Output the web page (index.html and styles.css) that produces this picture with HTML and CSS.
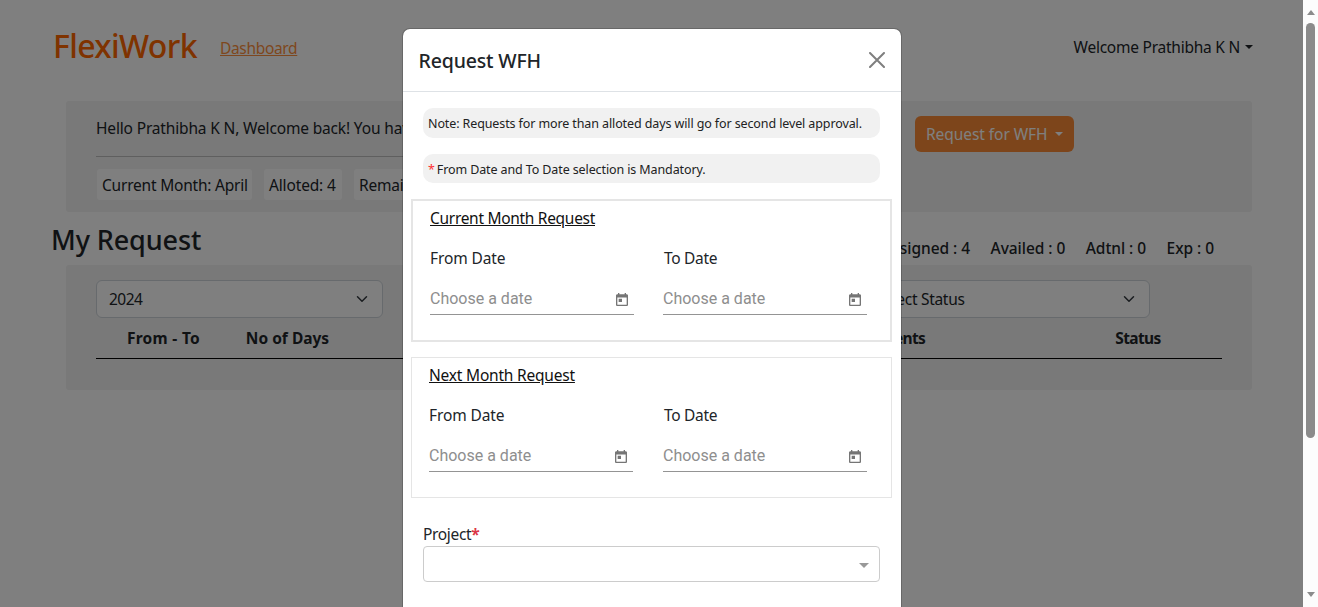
FILE: index.html
```html
<!DOCTYPE html>
<html lang="en">
<head>
<meta charset="utf-8">
<title>FlexiWork</title>
<link rel="stylesheet" href="styles.css">
</head>
<body>
<svg class="defs" width="0" height="0">
  <symbol id="calendar" viewBox="3 1 18 20" preserveAspectRatio="none"><path d="M19 3h-1V1h-2v2H8V1H6v2H5c-1.11 0-1.99.9-1.99 2L3 19c0 1.1.89 2 2 2h14c1.1 0 2-.9 2-2V5c0-1.1-.9-2-2-2zm0 16H5V8h14v11zM7 10h5v5H7z"/></symbol>
  <symbol id="chevron" viewBox="0 0 16 16"><path d="m2 5 6 6 6-6" fill="none" stroke="#343a40" stroke-width="2" stroke-linecap="round" stroke-linejoin="round"/></symbol>
</svg>
<div class="screen">
  <div class="page">
    <header class="topbar">
      <div class="brand">FlexiWork</div>
      <a class="nav-link">Dashboard</a>
      <div class="user"><span class="user-name">Welcome Prathibha K N</span><i class="caret"></i></div>
    </header>
    <section class="panel summary">
      <div class="summary-main">
        <div class="hello">Hello Prathibha K N, Welcome back! You have</div>
        <div class="chips">
          <span class="chip chip-month">Current Month: April</span>
          <span class="chip chip-alloted">Alloted: 4</span>
          <span class="chip chip-rest">Remain</span>
        </div>
      </div>
      <button class="request-btn"><span>Request for WFH</span><i class="caret"></i></button>
    </section>
    <div class="title-row">
      <h2>My Request</h2>
      <div class="stats"><span>Assigned : 4</span><span>Availed : 0</span><span>Adtnl : 0</span><span>Exp : 0</span></div>
    </div>
    <section class="panel list">
      <div class="filters">
        <div class="select"><span class="year">2024</span><svg width="16" height="12"><use href="#chevron"/></svg></div>
        <div class="select"><span class="status-value">Select Status</span><svg width="16" height="12"><use href="#chevron"/></svg></div>
      </div>
      <div class="thead"><span class="th-range">From - To</span><span>No of Days</span><span></span><span class="th-comments">Comments</span><span class="th-status">Status</span></div>
    </section>
  </div>
  <div class="scrollbar"><i class="up"></i><i class="thumb"></i><i class="down"></i></div>

  <div class="backdrop">
    <div class="modal">
      <div class="modal-head">
        <h5>Request WFH</h5>
        <svg width="16" height="16" viewBox="0 0 16 16"><path d="M1 1 15 15M15 1 1 15" stroke="#7f7f7f" stroke-width="2" stroke-linecap="round"/></svg>
      </div>
      <div class="note note-first">Note: Requests for more than alloted days will go for second level approval.</div>
      <div class="note note-second"><b>*</b><span>From Date and To Date selection is Mandatory.</span></div>
      <div class="box box-current">
        <div class="box-title">Current Month Request</div>
        <div class="fields">
          <div class="field"><label>From Date</label><div class="date"><span>Choose a date</span><svg width="12" height="13"><use href="#calendar"/></svg></div></div>
          <div class="field"><label class="to">To Date</label><div class="date"><span>Choose a date</span><svg width="12" height="13"><use href="#calendar"/></svg></div></div>
        </div>
      </div>
      <div class="box box-next">
        <div class="box-title">Next Month Request</div>
        <div class="fields">
          <div class="field"><label>From Date</label><div class="date"><span>Choose a date</span><svg width="12" height="13"><use href="#calendar"/></svg></div></div>
          <div class="field"><label class="to">To Date</label><div class="date"><span>Choose a date</span><svg width="12" height="13"><use href="#calendar"/></svg></div></div>
        </div>
      </div>
      <div class="project-label"><span>Project</span><b>*</b></div>
      <div class="project-select"><i></i></div>
    </div>
  </div>
</div>
</body>
</html>
```
FILE: styles.css
```css
* { box-sizing: border-box; }
body { margin: 0; font: 15.5px/24px "Noto Sans", "Open Sans", sans-serif; color: #212529; background: #fff; }
.defs { display: block; position: absolute; }
.screen { position: relative; display: flex; width: 1318px; height: 607px; overflow: hidden; }
.page { flex: 1; }

.topbar { display: flex; height: 101px; padding: 0 50px 0 52px; align-items: flex-start; }
.brand { margin-top: 22px; width: 168px; padding-left: 1px; font-size: 32px; line-height: 48px; font-weight: 500; letter-spacing: -.65px; color: #f60; }
.nav-link { margin-top: 36px; color: #fd8f3c; text-decoration: underline; letter-spacing: -.33px; }
.user { margin: 35px 0 0 auto; display: flex; align-items: center; gap: 5px; }
.user-name { letter-spacing: -.24px; white-space: nowrap; }
.caret { border: 4.5px solid transparent; border-top-color: currentColor; border-bottom: 0; }

.panel { margin: 0 51px 0 66px; border-radius: 3px; background: #f2f2f2; }
.summary { display: flex; height: 111px; padding: 15px 30px; }
.summary-main { width: 799px; margin-right: 20px; }
.hello { height: 41px; border-bottom: 1px solid #bfbfbf; letter-spacing: -.16px; }
.chips { display: flex; gap: 12px; margin: 12px 1px 0; }
.chip { height: 31px; padding: 4px 5px; border-radius: 3px; background: #fff; white-space: nowrap; letter-spacing: -.21px; }
.chip-month { width: 155px; }
.chip-alloted { width: 78px; letter-spacing: -.15px; }
.request-btn { display: flex; align-items: center; gap: 8px; width: 159px; height: 36px; padding: 0 11px; border: 0; border-radius: 6px; background: #fa8b36; color: #fff; font: inherit; letter-spacing: -.06px; white-space: nowrap; }

.title-row { display: flex; justify-content: space-between; height: 53px; padding: 0 89px 0 51px; }
h2 { margin: 10px 0 0; font-size: 27px; line-height: 36px; font-weight: 500; letter-spacing: -.1px; }
.stats { display: flex; gap: 20.5px; margin-top: 24px; font-weight: 500; letter-spacing: -.05px; }

.list { height: 125px; padding: 15px 30px; }
.filters { display: flex; gap: 480px; }
.select { display: flex; align-items: center; justify-content: space-between; width: 287px; height: 38px; padding: 0 12px; border: 1px solid #ced4da; border-radius: 6px; background: #fff; }
.year { letter-spacing: -.5px; }
.status-value { letter-spacing: -.3px; }
.thead { display: grid; grid-template-columns: 135px 113px 374px 336px 168px; height: 41px; padding-top: 8px; border-bottom: 1px solid #000; font-weight: 700; text-align: center; }
.th-range { letter-spacing: .3px; }
.th-comments { letter-spacing: -.7px; }
.th-status { letter-spacing: -.6px; }

.scrollbar { display: flex; flex-direction: column; align-items: center; width: 15px; background: #fcfcfc; }
.up, .down { border: 4.5px solid transparent; }
.up { margin-top: 10px; border-top: 0; border-bottom: 5px solid #8b8b8b; }
.down { margin-top: auto; margin-bottom: 10px; border-bottom: 0; border-top: 5px solid #8b8b8b; }
.thumb { width: 9px; height: 415px; margin-top: 8px; border-radius: 5px; background: #8b8b8b; }

.backdrop { position: absolute; inset: 0 15px 0 0; display: flex; justify-content: center; align-items: flex-start; background: rgba(0, 0, 0, .5); }
.modal { width: 500px; height: 700px; margin: 28px 0 0 1px; border: 1px solid rgba(0, 0, 0, .18); border-radius: 8px; background: #fff; background-clip: padding-box; }
.modal-head { display: flex; justify-content: space-between; align-items: center; height: 63px; padding: 0 16px 0 15.5px; border-bottom: 1px solid #dee2e6; }
h5 { margin: 2px 0 0; font-size: 19.5px; line-height: 30px; font-weight: 500; letter-spacing: -.16px; }
.note { margin: 16px 21px 0 20px; padding: 6px 5px 4px; border-radius: 10px; background: #f1f1f1; color: #222; font-size: 12.5px; line-height: 20px; letter-spacing: -.11px; white-space: nowrap; }
.note-first { height: 30px; }
.note-second { display: flex; gap: 2px; height: 29px; }
.note b { color: #ff3030; font-weight: 400; }
.box { margin: 0 9px 0 8px; border: 1px solid #e5e5e5; }
.box-current { margin-top: 16px; height: 143px; border-width: 2px; padding: 5px 17px; }
.box-next { margin-top: 15px; height: 141px; padding: 5px 17px; }
.box-title { color: #111; text-decoration: underline; letter-spacing: -.3px; }
.box-next .box-title { letter-spacing: -.2px; }
.fields { display: flex; gap: 29px; margin-top: 16px; }
.box-next .fields { gap: 30px; }
.field { width: 204px; }
.field label { display: block; letter-spacing: -.12px; }
.field label.to { padding-left: 1px; letter-spacing: -.3px; }
.date { display: flex; align-items: center; justify-content: space-between; height: 32px; margin-top: 13px; padding: 0 6px 0 0; border-bottom: 1px solid #949494; color: #8e8e8e; font: 16px/24px Roboto, sans-serif; }
.date svg { fill: #757575; margin-top: 2px; }
.project-label { margin: 24px 20px 0; letter-spacing: -.34px; }
.project-label b { color: #dc3545; }
.project-select { display: flex; align-items: center; justify-content: flex-end; height: 36px; margin: 0 21px 0 20px; padding: 2px 10px 0; border: 1px solid #ccc; border-radius: 4px; }
.project-select i { border: 5px solid transparent; border-top-color: #999; border-bottom: 0; }
```
